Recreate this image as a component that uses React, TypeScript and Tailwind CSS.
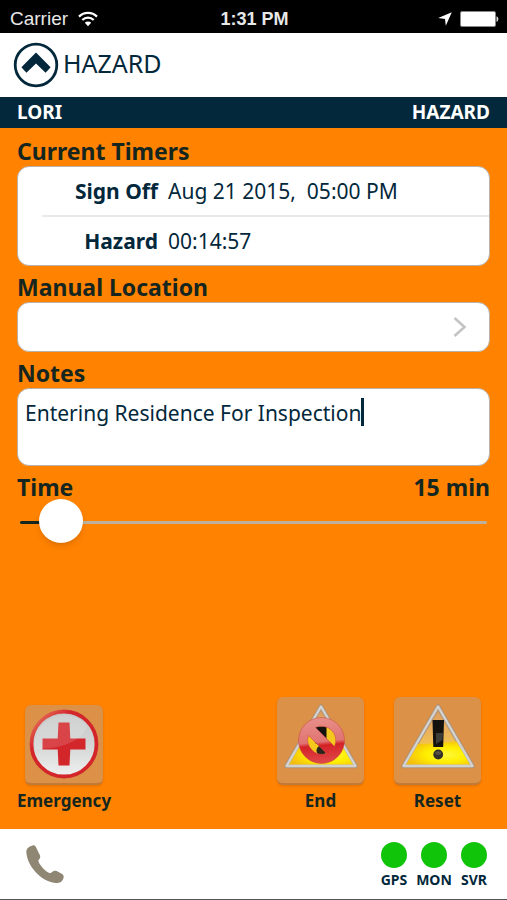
import { useState } from 'react';
import type { CSSProperties, ReactNode } from 'react';

const MIN_TIME = 10;
const MAX_TIME = 120;

const SECTION_LABEL = 'block mb-0.5 text-[23px] leading-[26px] font-bold text-[#14261f]';

const WifiIcon = () => (
  <svg viewBox="0 0 20 16" className="w-5 h-4" fill="none" stroke="#fff" strokeWidth="2.2">
    <path d="M1 5.6a12.7 12.7 0 0 1 18 0" />
    <path d="M4.3 9a8 8 0 0 1 11.4 0" />
    <path d="M10 15.2 6.8 11.8a4.6 4.6 0 0 1 6.4 0z" fill="#fff" stroke="none" />
  </svg>
);

const LocationIcon = () => (
  <svg viewBox="0 0 14 14" className="w-3.5 h-3.5" fill="#fff">
    <path d="M13.8.2 7.8 13.8 7 7 .2 6z" />
  </svg>
);

const BatteryIcon = () => (
  <svg viewBox="0 0 39 16" className="w-[39px] h-4">
    <rect x="0.5" y="0.5" width="35" height="15" rx="1.5" fill="#fff" stroke="#888" />
    <path d="M36.5 5.2c2.4.6 2.4 5 0 5.6z" fill="#ddd" />
  </svg>
);

const ChevronCircle = () => (
  <svg viewBox="0 0 46 46" className="w-[46px] h-[46px]">
    <circle cx="23" cy="23" r="20.8" fill="none" stroke="#03283b" strokeWidth="2.8" />
    <path d="M23 10.6 37.6 25.2 32.600 30.800 23 21.400 13.400 30.800 8.400 25.200z" fill="#03283b" />
  </svg>
);

const PhoneIcon = () => (
  <svg viewBox="0 0 38 38" className="w-[38px] h-[38px]" fill="#8f8674">
    <path d="M6.6.4C2 1.8 0 3.8.4 8 1.6 21 14.6 36.4 29.6 37.9c3.4.3 6-.6 7.6-4 .8-1.8.6-3.4-.6-4.6l-6-3.2c-1.4-.8-2.7-.5-3.8.4-1.2 1-2 1.900-3.300 1.500-4.200-1.600-9.400-7.400-11-11.600-.4-1.300.5-1.900 1.200-3 .7-1 .7-2.200.1-3.300L9.900 2C9.100.6 8 .1 6.600.4z" />
  </svg>
);

const EmergencyIcon = () => (
  <svg viewBox="0 0 70 70" className="w-[70px] h-[70px]">
    <defs>
      <linearGradient id="plate" x1="0" y1="0" x2="0" y2="1">
        <stop offset="0" stopColor="#c6c8c7" />
        <stop offset="0.5" stopColor="#d3d5d4" />
        <stop offset="1" stopColor="#f0f0f0" />
      </linearGradient>
      <linearGradient id="rim" x1="0" y1="0" x2="0.6" y2="0.6">
        <stop offset="0.2" stopColor="#e2604f" />
        <stop offset="0.5" stopColor="#d3262b" />
      </linearGradient>
    </defs>
    <circle cx="35" cy="35" r="32.5" fill="url(#plate)" stroke="url(#rim)" strokeWidth="3.8" />
    <path d="M29.5 13.5h11l.8 16h15.2v11H41.3l-.8 16h-11l-.8-16H13.5v-11h15.2z" fill="#d3262b" />
    <path d="M6 40A29.5 29.5 0 0 1 58 17C54 31 34 40 6 40z" fill="#fff" fillOpacity="0.14" />
  </svg>
);

// Same warning sign on both tiles, children go on top of it
const WarningIcon = ({ id, children }: { id: string; children?: ReactNode }) => (
  <svg viewBox="0 0 76 68" className="w-[76px] h-[68px]">
    <defs>
      <linearGradient id={`${id}-top`} x1="0" y1="0" x2="0" y2="1">
        <stop offset="0" stopColor="#dc9a5c" />
        <stop offset="0.4" stopColor="#eab05e" />
        <stop offset="0.7" stopColor="#f2c84c" />
      </linearGradient>
      <radialGradient id={`${id}-base`} cx="0.62" cy="0.55" r="0.6">
        <stop offset="0" stopColor="#fff83a" />
        <stop offset="0.5" stopColor="#ffee00" />
        <stop offset="1" stopColor="#f3bd10" />
      </radialGradient>
    </defs>
    <path d="M38 4.5 72.5 64H3.5z" fill={`url(#${id}-top)`} stroke="#a98a6c" strokeWidth="4.4" strokeLinejoin="round" />
    <path d="M16 42Q40 42 58 39L72.5 64H3.5z" fill={`url(#${id}-base)`} />
    <path d="M38 4.5 72.5 64H3.5z" fill="none" stroke="#c2bfbb" strokeWidth="3" strokeLinejoin="round" />
    <path d="M38 4.5 72.5 64H3.5z" fill="none" stroke="#e4e1dc" strokeWidth="1" strokeLinejoin="round" />
    <path d="M32.500 18h11.500l-.8 27h-9.900z" fill="#14120e" />
    <path d="M36 31h7l-.5 7L36 42z" fill="#3c3c39" />
    <circle cx="38.2" cy="52.500" r="4.900" fill="#33302a" />
    <ellipse cx="38.2" cy="51" rx="3" ry="1.800" fill="#57534a" />
    {children}
  </svg>
);

const NoEntryRing = ({ cx, cy }: { cx: number; cy: number }) => (
  <g>
    <defs>
      <linearGradient id="ring" x1="0.3" y1="0" x2="0.4" y2="1">
        <stop offset="0" stopColor="#e8908a" />
        <stop offset="0.54" stopColor="#e07472" />
        <stop offset="0.62" stopColor="#d42226" />
        <stop offset="1" stopColor="#e0484b" />
      </linearGradient>
    </defs>
    {/* clear the sign's lower half so the yellow shows through both holes */}
    <circle cx={cx} cy={cy} r="16" fill="#f5c81e" />
    <path d={`M${cx - 6} ${cy - 14}h11v17h-11z`} fill="#14120e" />
    <circle cx={cx} cy={cy + 10} r="5" fill="#2a261c" />
    <path
      fill="url(#ring)"
      stroke="#c9403f"
      strokeWidth="0.5"
      fillRule="evenodd"
      transform={`translate(${cx} ${cy})`}
      d="M0-23a23 23 0 1 1 0 46 23 23 0 1 1 0-46zM-6-13 13 6A14.3 14.3 0 0 0-6-13zM-13-5A14.3 14.3 0 0 0 5 13z"
    />
  </g>
);

const ActionButton = ({ label, small, children }: { label: string; small?: boolean; children: ReactNode }) => (
  <button type="button" className="flex flex-col items-center gap-1">
    <span className={`flex justify-center rounded-md bg-[#dc9148] border-b-2 border-[#c07a3a] shadow-sm ${
      small ? 'w-[78px] h-20 items-center' : 'w-[87px] h-22 items-start pt-[5px]'
    }`}>{children}</span>
    <span className="text-[17px] leading-6 font-bold text-[#14261f]">{label}</span>
  </button>
);

const TimerRow = ({ label, value }: { label: string; value: string }) => (
  <div className="flex-1 flex items-center gap-2.5">
    <dt className="w-[140px] text-right font-bold">{label}</dt>
    <dd className="whitespace-pre">{value}</dd>
  </div>
);

const StatusDot = ({ label }: { label: string }) => (
  <div className="w-10 flex flex-col items-center">
    <span className="w-[26px] h-[26px] rounded-full bg-[#10c40a]" />
    <span className="mt-0.5 text-[14px] leading-5 font-bold">{label}</span>
  </div>
);

export default function App() {
  const [notes, setNotes] = useState('Entering Residence For Inspection');
  const [time, setTime] = useState(15);
  const fill = { '--fill': `${4 + ((time - MIN_TIME) / (MAX_TIME - MIN_TIME)) * 92}%` } as CSSProperties;

  return (
    <div className="min-h-screen flex flex-col bg-[#ff8200] font-['Noto_Sans',sans-serif] text-[#03283b]">
      {/* Phone status bar */}
      <div className="h-[33px] shrink-0 grid grid-cols-3 items-center bg-black pl-2.5 pr-2 pt-1 text-[19px] leading-6 text-[#e8e8e8] font-['Liberation_Sans',Arial,sans-serif]">
        <div className="flex items-center gap-2.5">Carrier <WifiIcon /></div>
        <div className="text-center text-[18px] font-bold">1:31 PM</div>
        <div className="flex items-center justify-end gap-2"><LocationIcon /><BatteryIcon /></div>
      </div>

      <header className="h-16 shrink-0 flex items-center gap-1 bg-white px-[13px]">
        <button type="button" aria-label="Back to top"><ChevronCircle /></button>
        <h1 className="pb-1 text-[25px] leading-8">HAZARD</h1>
      </header>

      <div className="h-[31px] shrink-0 flex items-center justify-between bg-[#03283b] px-[17px] pb-0.5 text-[19px] leading-6 font-bold text-white">
        <span>LORI</span>
        <span>HAZARD</span>
      </div>

      <main className="flex-1 flex flex-col px-[17px] pt-2.5 pb-4">
        <section className="mb-2">
          <h2 className={SECTION_LABEL}>Current Timers</h2>
          <dl className="h-25 flex flex-col rounded-xl border border-[#b9b1a6] bg-white text-[21px] leading-7">
            <TimerRow label="Sign Off" value="Aug 21 2015,  05:00 PM" />
            <div className="h-0.5 ml-6 bg-[#e9e9e9]" />
            <TimerRow label="Hazard" value="00:14:57" />
          </dl>
        </section>

        <section className="mb-2">
          <h2 id="location-label" className={SECTION_LABEL}>Manual Location</h2>
          <button type="button" aria-labelledby="location-label"
            className="w-full h-[50px] flex items-center justify-end rounded-xl border border-[#b9b1a6] bg-white pr-[22px]">
            <svg viewBox="0 0 14 20" className="w-3.5 h-5" fill="none" stroke="#c4c4c4" strokeWidth="2.6">
              <path d="M1.5 1 11.5 10l-10 9" />
            </svg>
          </button>
        </section>

        <section className="mb-2">
          <label htmlFor="notes" className={SECTION_LABEL}>Notes</label>
          <div className="relative">
            <textarea id="notes" value={notes} onChange={(e) => setNotes(e.target.value)}
              className="block w-full h-[78px] resize-none rounded-xl border border-[#b9b1a6] bg-white px-[7px] pt-2.5 text-[21px] leading-7 caret-transparent focus:outline-none" />
            <span className="absolute left-[344px] top-2.5 w-[3px] h-7 bg-[#03283b]" />
          </div>
        </section>

        <section>
          <div className="flex justify-between">
            <label htmlFor="time" className={SECTION_LABEL}>Time</label>
            <output htmlFor="time" className={SECTION_LABEL}>{time} min</output>
          </div>
          <div className="px-[3px]">
            <input id="time" type="range" min={MIN_TIME} max={MAX_TIME} value={time} style={fill}
              onChange={(e) => setTime(Number(e.target.value))}
              className="block w-full h-10 appearance-none bg-transparent [&::-webkit-slider-runnable-track]:h-[3px] [&::-webkit-slider-runnable-track]:rounded-full [&::-webkit-slider-runnable-track]:bg-[linear-gradient(to_right,#14261f_var(--fill),#bdb09c_var(--fill))] [&::-webkit-slider-thumb]:appearance-none [&::-webkit-slider-thumb]:w-11 [&::-webkit-slider-thumb]:h-11 [&::-webkit-slider-thumb]:-mt-[22px] [&::-webkit-slider-thumb]:rounded-full [&::-webkit-slider-thumb]:bg-white [&::-webkit-slider-thumb]:shadow-md" />
          </div>
        </section>

        <div className="mt-auto flex items-end justify-between pr-[9px]">
          <ActionButton label="Emergency" small><EmergencyIcon /></ActionButton>
          <div className="flex gap-[30px]">
            <ActionButton label="End">
              <WarningIcon id="end"><NoEntryRing cx={38.5} cy={38.5} /></WarningIcon>
            </ActionButton>
            <ActionButton label="Reset"><WarningIcon id="reset" /></ActionButton>
          </div>
        </div>
      </main>

      <footer className="h-[71px] shrink-0 flex items-center justify-between border-b border-[#555] bg-white pl-[26px] pr-[13px]">
        <button type="button" aria-label="Call"><PhoneIcon /></button>
        <div className="flex pt-[3px]">
          <StatusDot label="GPS" />
          <StatusDot label="MON" />
          <StatusDot label="SVR" />
        </div>
      </footer>
    </div>
  );
}
